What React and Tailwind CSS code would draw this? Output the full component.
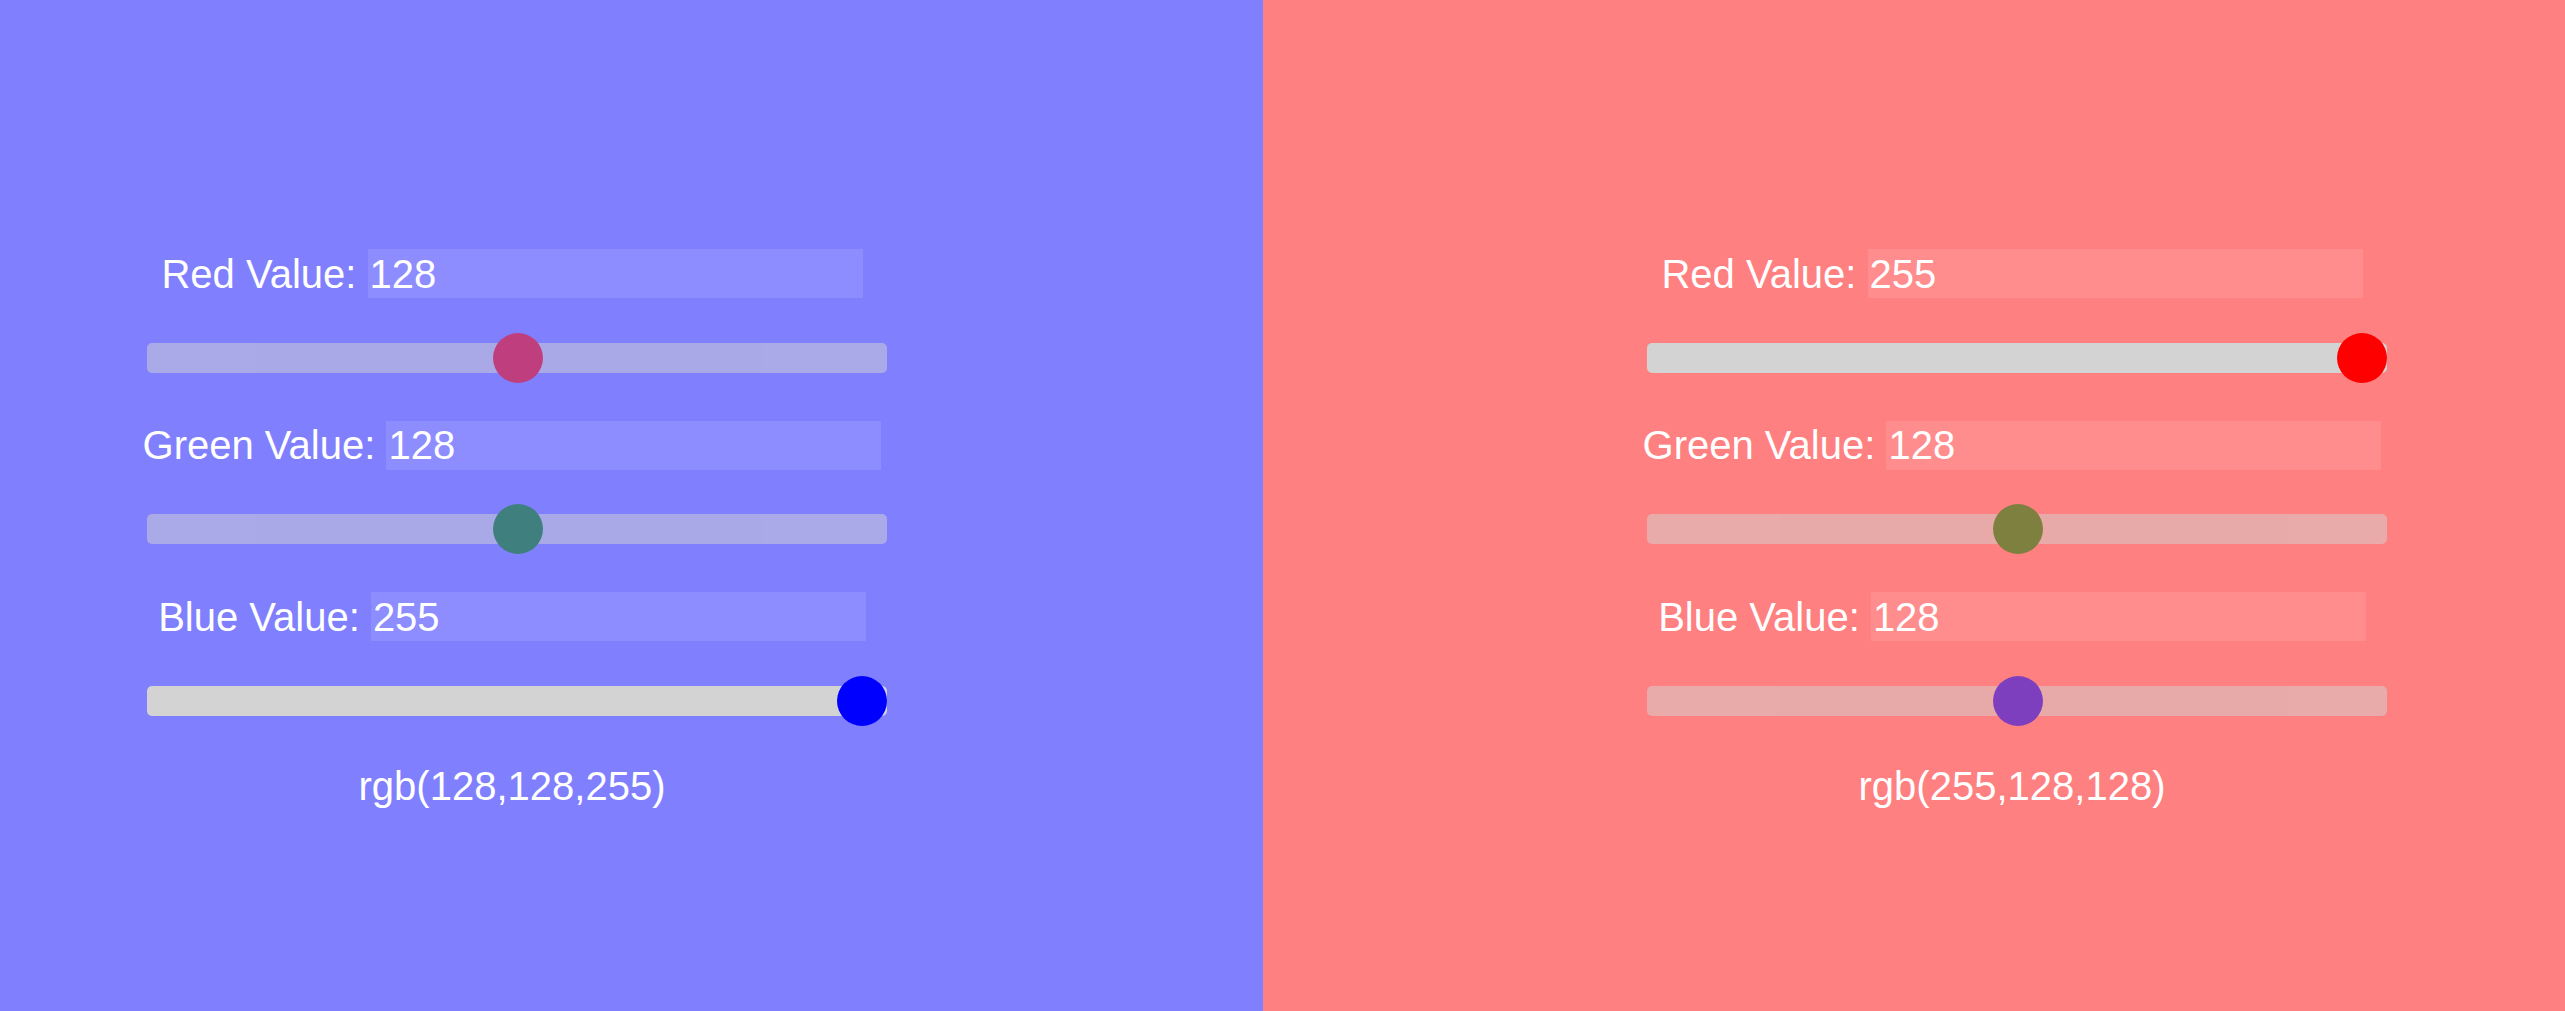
import React from "react";

const panels = [
  { bg: "bg-[#8080ff]", pad: "pl-[147px]", width: "w-[1263px] shrink-0", r: 128, g: 128, b: 255 },
  { bg: "bg-[#ff8080]", pad: "pl-[384px]", width: "flex-1", r: 255, g: 128, b: 128 },
];

function Slider({ value, thumb }) {
  return (
    <div className="relative h-[50px] w-[740px]" style={{ opacity: value / 255 }}>
      <div className="absolute left-0 right-0 top-[10px] h-[30px] rounded-[5px] bg-[#d3d3d3]" />
      <div
        className={`absolute top-0 h-[50px] w-[50px] rounded-full ${thumb}`}
        style={{ left: `${(value / 255) * 690}px` }}
      />
    </div>
  );
}

function Channel({ label, value, thumb, first }) {
  return (
    <div className={first ? "" : "mt-[38px]"}>
      <div className="flex w-[740px] justify-center pr-[10px]">
        <div className="flex shrink-0 items-baseline whitespace-nowrap">
          <span className="shrink-0 leading-[49px]">{label}&nbsp;</span>
          <input
            readOnly
            value={value}
            className="h-[49px] w-[495px] shrink-0 bg-white/10 px-[2px] text-[40px] text-white outline-none"
          />
        </div>
      </div>
      <div className="mt-[34px]">
        <Slider value={value} thumb={thumb} />
      </div>
    </div>
  );
}

export default function App() {
  return (
    <div className="flex h-[1011px] w-[2565px] font-['Liberation_Sans',Arial,sans-serif] text-[40px] text-white">
      {panels.map((p, i) => (
        <div key={i} className={`${p.width} ${p.bg} ${p.pad} pt-[249px]`}>
          <Channel first label="Red Value:" value={p.r} thumb="bg-[#ff0000]" />
          <Channel label="Green Value:" value={p.g} thumb="bg-[#008000]" />
          <Channel label="Blue Value:" value={p.b} thumb="bg-[#0000ff]" />
          <div className="mt-[37px] w-[740px] pr-[10px] text-center leading-[46px]">
            rgb({p.r},{p.g},{p.b})
          </div>
        </div>
      ))}
    </div>
  );
}
